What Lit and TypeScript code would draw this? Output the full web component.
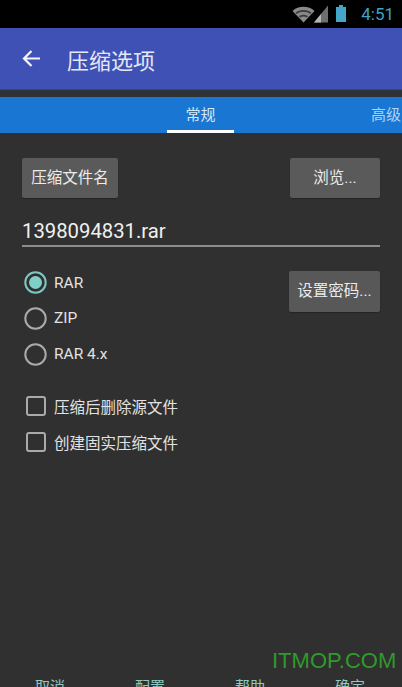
import { LitElement, html, svg, css } from "lit";
import { customElement } from "lit/decorators.js";

@customElement("app-root")
export class AppRoot extends LitElement {
  static styles = css`
    :host {
      display: block;
      width: 402px;
      height: 687px;
      overflow: hidden;
      position: relative;
      background: #303030;
      font-family: Roboto, "Noto Sans CJK SC", sans-serif;
      color: #e6e6e6;
    }
    .status {
      height: 28px;
      background: #000;
      display: flex;
      align-items: center;
      justify-content: flex-end;
      padding-right: 8px;
    }
    .status svg {
      display: block;
    }
    .wifi {
      margin-right: -3px;
    }
    .battery {
      margin-left: 6px;
    }
    .clock {
      font-size: 17px;
      color: #3ba3c6;
      margin-left: 14px;
      line-height: 28px;
    }
    .appbar {
      height: 62px;
      background: #3f51b5;
      display: flex;
      align-items: center;
      padding-left: 22px;
      gap: 26px;
      box-sizing: border-box;
      border-bottom: 1px solid #3b4585;
    }
    .appbar h1 {
      margin: 0;
      font-size: 22px;
      font-weight: 400;
      color: #e4e7f4;
    }
    .gap {
      height: 7px;
      background: #2e3236;
    }
    .tabs {
      height: 36px;
      background: #1976d2;
      display: flex;
      font-size: 15px;
      color: #d5e6f7;
    }
    .tab {
      width: 67px;
      margin-left: 167px;
      box-sizing: border-box;
      height: 36px;
      line-height: 37px;
      text-align: center;
      border-bottom: 3px solid #fff;
    }
    .tab.next {
      border: 0;
      margin-left: 137px;
      width: auto;
      color: #b4d2ef;
      white-space: nowrap;
    }
    .body {
      padding: 25px 22px 0;
    }
    .row {
      display: flex;
      justify-content: space-between;
      align-items: flex-start;
    }
    .btn {
      height: 40px;
      background: #5a5a5a;
      border-radius: 2px;
      font-size: 15.5px;
      line-height: 40px;
      text-align: center;
      color: #ececec;
      box-shadow: 0 1px 1px rgba(0, 0, 0, 0.25);
    }
    .btn.file {
      width: 96px;
    }
    .btn.browse {
      width: 90px;
    }
    .name {
      margin-top: 17px;
      height: 30px;
      border-bottom: 2px solid #8c8c8c;
      font-size: 20.3px;
      line-height: 33px;
      color: #f0f0f0;
    }
    .options {
      margin-top: 24px;
      display: flex;
      justify-content: space-between;
      align-items: flex-start;
    }
    .radios {
      display: flex;
      flex-direction: column;
      gap: 10.8px;
      margin-top: -1px;
    }
    .choice {
      display: flex;
      align-items: center;
      height: 25px;
      font-size: 15.5px;
      color: #e2e2e2;
    }
    .choice svg {
      display: block;
      margin-right: 7px;
      margin-left: 2px;
    }
    .checks {
      margin-top: 27px;
      display: flex;
      flex-direction: column;
      gap: 10.8px;
    }
    .checks .choice svg {
      margin-left: 3px;
      margin-right: 7px;
    }
    .btn.pw {
      width: 91px;
      height: 41px;
      line-height: 41px;
      background: #585858;
    }
    .actions {
      position: absolute;
      left: 0;
      top: 677px;
      display: grid;
      grid-template-columns: repeat(4, 100px);
      font-size: 15px;
      color: #8fc9c4;
      text-align: center;
      line-height: 20px;
    }
    .watermark {
      position: absolute;
      left: 272px;
      top: 649px;
      font-family: "Liberation Sans", Arial, sans-serif;
      font-size: 22px;
      line-height: 24px;
      color: #2f9a2b;
      white-space: nowrap;
    }
  `;

  render() {
    return html`
      <div class="status">
        <svg class="wifi" width="24" height="20" viewBox="0 0 24 20">
          <path d="M0.500 7C3.500 4 7.300 2.700 11.500 2.700S19.500 4 22.500 7L11.500 18.500Z" fill="#8a8a8a" />
          <path d="M3.500 8.700C5.500 7 8.300 6 11.500 6s6 1 8 2.700l-1.200 1.300C16.500 8.600 14 7.800 11.500 7.800S6.500 8.600 4.700 10Z" fill="#3a3a3a" />
          <path d="M7 12.200C8.200 11.200 9.800 10.700 11.500 10.700s3.300.5 4.500 1.500l-1.200 1.300c-.9-.7-2-1-3.300-1s-2.400.3-3.300 1Z" fill="#3a3a3a" />
        </svg>
        <svg width="16" height="20" viewBox="0 0 16 20">
          <path d="M15 1.500V18.500H1Z" fill="#6e6e6e" />
          <path d="M8 10V18.500H1Z" fill="#b5b5b5" />
        </svg>
        <svg class="battery" width="12" height="20" viewBox="0 0 12 20">
          <path d="M4 1H8V3H11V18H1V3H4Z" fill="#45a5c8" />
        </svg>
        <span class="clock">4:51</span>
      </div>
      <div class="appbar">
        <svg width="19" height="19" viewBox="0 0 19 19">
          <path d="M18 9.500H2M9.500 2L2 9.500L9.500 17" fill="none" stroke="#f3f4fa" stroke-width="2.200" />
        </svg>
        <h1>压缩选项</h1>
      </div>
      <div class="gap"></div>
      <div class="tabs">
        <div class="tab">常规</div>
        <div class="tab next">高级</div>
      </div>
      <div class="body">
        <div class="row">
          <div class="btn file">压缩文件名</div>
          <div class="btn browse">浏览...</div>
        </div>
        <div class="name">1398094831.rar</div>
        <div class="options">
          <div class="radios">
            ${this.renderRadio("RAR", true)} ${this.renderRadio("ZIP", false)}
            ${this.renderRadio("RAR 4.x", false)}
          </div>
          <div class="btn pw">设置密码...</div>
        </div>
        <div class="checks">
          ${this.renderCheck("压缩后删除源文件")} ${this.renderCheck("创建固实压缩文件")}
        </div>
      </div>
      <div class="actions">
        <span>取消</span><span>配置</span><span>帮助</span><span>确定</span>
      </div>
      <div class="watermark">ITMOP.COM</div>
    `;
  }

  private renderRadio(label: string, on: boolean) {
    return html`<div class="choice">
      <svg width="23" height="23" viewBox="0 0 23 23">
        <circle cx="11.500" cy="11.500" r="10.200" fill="none" stroke=${on ? "#7fc8c1" : "#aaaaaa"} stroke-width="2" />
        ${on ? svg`<circle cx="11.500" cy="11.500" r="6.500" fill="#7fd0c8" />` : ""}
      </svg>
      ${label}
    </div>`;
  }

  private renderCheck(label: string) {
    return html`<div class="choice">
      <svg width="22" height="22" viewBox="0 0 22 22">
        <rect x="2" y="2" width="18" height="18" rx="2" fill="none" stroke="#aaaaaa" stroke-width="2" />
      </svg>
      ${label}
    </div>`;
  }
}
